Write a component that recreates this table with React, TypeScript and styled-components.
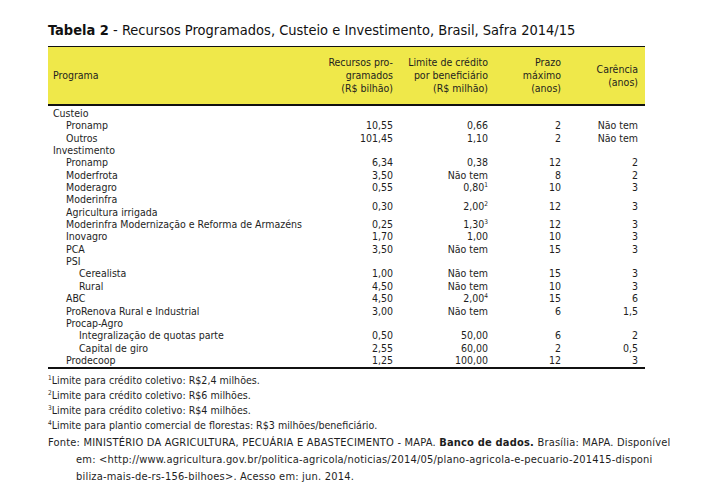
import React from 'react';
import styled, { createGlobalStyle } from 'styled-components';

// Styled Components
const GlobalStyle = createGlobalStyle`
  body {
    margin: 0;
    background: #ffffff;
    font-family: "DejaVu Sans Condensed", "DejaVu Sans", sans-serif;
    color: #1e1e1e;
  }
`;

const Page = styled.div`
  padding: 21px 0 0 48px;
  width: 707px;
  height: 503px;
  box-sizing: border-box;
`;

const Title = styled.div`
  font-size: 14.5px;
  line-height: 18px;
  color: #111;
  white-space: nowrap;
  margin-bottom: 7px;
`;

const Table = styled.table`
  border-collapse: collapse;
  table-layout: fixed;
  width: 597px;
  font-size: 10.5px;
`;

const HeadCell = styled.th<{ $left?: boolean }>`
  background: #efe84a;
  border-top: 1.5px solid #111;
  border-bottom: 2px solid #111;
  height: 57px;
  padding: 0 ${(p) => (p.$left ? '0' : '7px')} 0 ${(p) => (p.$left ? '5px' : '0')};
  text-align: ${(p) => (p.$left ? 'left' : 'right')};
  vertical-align: middle;
  font-weight: normal;
  line-height: 12.7px;
  white-space: nowrap;
`;

const Body = styled.tbody`
  tr:first-child td {
    padding-top: 1px;
  }
  tr:last-child td {
    border-bottom: 2px solid #111;
    padding-bottom: 1px;
  }
`;

const LabelCell = styled.td<{ $level: number }>`
  padding: 0 0 0 ${(p) => 5 + p.$level * 13}px;
  line-height: 12.35px;
  white-space: nowrap;
  vertical-align: middle;
`;

const ValueCell = styled.td`
  padding: 0 7px 0 0;
  line-height: 12.35px;
  text-align: right;
  white-space: nowrap;
  vertical-align: middle;
`;

const Sup = styled.sup`
  font-size: 6.5px;
  line-height: 0;
  vertical-align: 4px;
`;

const Notes = styled.div`
  margin-top: 4px;
  font-size: 10.6px;
  line-height: 15px;
`;

const Note = styled.div`
  white-space: nowrap;
`;

const Source = styled.div`
  margin-top: 1px;
  font-size: 11px;
  line-height: 17px;
  padding-left: 28px;
  text-indent: -28px;
  white-space: nowrap;
  letter-spacing: 0.2px;
`;

type Row = {
  label: React.ReactNode;
  level: 0 | 1 | 2;
  values?: React.ReactNode[];
};

const rows: Row[] = [
  { label: 'Custeio', level: 0 },
  { label: 'Pronamp', level: 1, values: ['10,55', '0,66', '2', 'Não tem'] },
  { label: 'Outros', level: 1, values: ['101,45', '1,10', '2', 'Não tem'] },
  { label: 'Investimento', level: 0 },
  { label: 'Pronamp', level: 1, values: ['6,34', '0,38', '12', '2'] },
  { label: 'Moderfrota', level: 1, values: ['3,50', 'Não tem', '8', '2'] },
  { label: 'Moderagro', level: 1, values: ['0,55', <>0,80<Sup>1</Sup></>, '10', '3'] },
  {
    label: (
      <>
        Moderinfra
        <br />
        Agricultura irrigada
      </>
    ),
    level: 1,
    values: ['0,30', <>2,00<Sup>2</Sup></>, '12', '3'],
  },
  {
    label: 'Moderinfra Modernização e Reforma de Armazéns',
    level: 1,
    values: ['0,25', <>1,30<Sup>3</Sup></>, '12', '3'],
  },
  { label: 'Inovagro', level: 1, values: ['1,70', '1,00', '10', '3'] },
  { label: 'PCA', level: 1, values: ['3,50', 'Não tem', '15', '3'] },
  { label: 'PSI', level: 1 },
  { label: 'Cerealista', level: 2, values: ['1,00', 'Não tem', '15', '3'] },
  { label: 'Rural', level: 2, values: ['4,50', 'Não tem', '10', '3'] },
  { label: 'ABC', level: 1, values: ['4,50', <>2,00<Sup>4</Sup></>, '15', '6'] },
  { label: 'ProRenova Rural e Industrial', level: 1, values: ['3,00', 'Não tem', '6', '1,5'] },
  { label: 'Procap-Agro', level: 1 },
  { label: 'Integralização de quotas parte', level: 2, values: ['0,50', '50,00', '6', '2'] },
  { label: 'Capital de giro', level: 2, values: ['2,55', '60,00', '2', '0,5'] },
  { label: 'Prodecoop', level: 1, values: ['1,25', '100,00', '12', '3'] },
];

const notes = [
  'Limite para crédito coletivo: R$2,4 milhões.',
  'Limite para crédito coletivo: R$6 milhões.',
  'Limite para crédito coletivo: R$4 milhões.',
  'Limite para plantio comercial de florestas: R$3 milhões/beneficiário.',
];

export default function App() {
  return (
    <>
      <GlobalStyle />
      <Page>
        <Title>
          <b>Tabela 2</b> - Recursos Programados, Custeio e Investimento, Brasil, Safra 2014/15
        </Title>

        <Table>
          <colgroup>
            <col style={{ width: 267 }} />
            <col style={{ width: 85 }} />
            <col style={{ width: 95 }} />
            <col style={{ width: 73 }} />
            <col style={{ width: 77 }} />
          </colgroup>
          <thead>
            <tr>
              <HeadCell $left>Programa</HeadCell>
              <HeadCell>
                Recursos pro-
                <br />
                gramados
                <br />
                (R$ bilhão)
              </HeadCell>
              <HeadCell>
                Limite de crédito
                <br />
                por beneficiário
                <br />
                (R$ milhão)
              </HeadCell>
              <HeadCell>
                Prazo
                <br />
                máximo
                <br />
                (anos)
              </HeadCell>
              <HeadCell>
                Carência
                <br />
                (anos)
              </HeadCell>
            </tr>
          </thead>
          <Body>
            {rows.map((r, i) => (
              <tr key={i}>
                <LabelCell $level={r.level}>{r.label}</LabelCell>
                {[0, 1, 2, 3].map((c) => (
                  <ValueCell key={c}>{r.values ? r.values[c] : ''}</ValueCell>
                ))}
              </tr>
            ))}
          </Body>
        </Table>

        <Notes>
          {notes.map((n, i) => (
            <Note key={i}>
              <Sup>{i + 1}</Sup>
              {n}
            </Note>
          ))}
        </Notes>

        <Source>
          Fonte: MINISTÉRIO DA AGRICULTURA, PECUÁRIA E ABASTECIMENTO - MAPA. <b>Banco de dados.</b> Brasília: MAPA. Disponível
          <br />
          em: &lt;http://www.agricultura.gov.br/politica-agricola/noticias/2014/05/plano-agricola-e-pecuario-201415-disponi
          <br />
          biliza-mais-de-rs-156-bilhoes&gt;. Acesso em: jun. 2014.
        </Source>
      </Page>
    </>
  );
}
